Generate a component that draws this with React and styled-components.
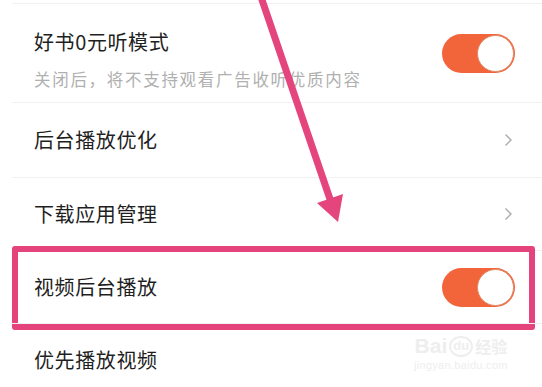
import styled, { createGlobalStyle } from 'styled-components';

const GlobalStyle = createGlobalStyle`
  html, body {
    margin: 0;
    padding: 0;
    background: #fff;
    overflow: hidden;
  }
  body {
    font-family: "Noto Sans CJK SC", "Noto Sans", sans-serif;
  }
`;

const Page = styled.div`
  position: relative;
  width: 542px;
  height: 387px;
  padding-top: 3px;
  box-sizing: border-box;
  overflow: hidden;
  background: #fff;
`;

const List = styled.div`
  display: flex;
  flex-direction: column;
`;

const Row = styled.div`
  position: relative;
  display: flex;
  align-items: center;
  justify-content: space-between;
  height: ${(p) => p.$height}px;
  margin-left: 12px;
  padding: 0 27px 0 22px;
  border-top: 1px solid #f1f1f1;
  box-sizing: border-box;
`;

const Highlight = styled.div`
  position: absolute;
  top: -5px;
  bottom: -7px;
  left: 0;
  right: 7px;
  border: 6px solid #e5437c;
  border-radius: 3px;
  pointer-events: none;
`;

const TextBlock = styled.div`
  display: flex;
  flex-direction: column;
  padding-top: ${(p) => p.$offset || 0}px;
`;

const Title = styled.div`
  font-size: 20px;
  line-height: 26px;
  letter-spacing: 0.6px;
  color: #1f1f1f;
`;

const Subtitle = styled.div`
  margin-top: 13px;
  font-size: 16.5px;
  line-height: 22px;
  letter-spacing: 1.7px;
  color: #b0b0b0;
`;

const Toggle = styled.div`
  display: flex;
  justify-content: flex-end;
  align-items: center;
  width: 73px;
  height: 39px;
  padding: 1px;
  box-sizing: border-box;
  border-radius: 20px;
  background: #f2653b;
`;

const Knob = styled.div`
  width: 37px;
  height: 37px;
  box-sizing: border-box;
  border-radius: 50%;
  background: #fff;
  border: 1.5px solid #dd8c68;
`;

const Chevron = styled.svg`
  width: 9px;
  height: 14px;
  margin-right: 2px;
`;

const Arrow = styled.svg`
  position: absolute;
  left: 0;
  top: 0;
  pointer-events: none;
`;

const Watermark = styled.div`
  position: absolute;
  left: 414px;
  top: 334px;
  display: flex;
  flex-direction: column;
  align-items: center;
  color: #eeeeee;
  pointer-events: none;
`;

const MarkTop = styled.div`
  display: flex;
  align-items: center;
  gap: 2px;
  font-family: "Liberation Sans", sans-serif;
  font-weight: bold;
  font-size: 21px;
  line-height: 24px;
`;

const MarkPaw = styled.span`
  display: inline-flex;
  align-items: center;
  justify-content: center;
  width: 24px;
  height: 21px;
  border-radius: 50%;
  border: 2px solid #eeeeee;
  font-size: 13px;
  box-sizing: border-box;
`;

const MarkCn = styled.span`
  font-family: "Noto Sans CJK SC", sans-serif;
  font-size: 16px;
  font-weight: bold;
`;

const MarkUrl = styled.div`
  font-family: "Liberation Sans", sans-serif;
  font-size: 11px;
  line-height: 14px;
  letter-spacing: 0.3px;
`;

const Switch = () => (
  <Toggle>
    <Knob />
  </Toggle>
);

const Arrowhead = () => (
  <Chevron viewBox="0 0 9 14">
    <path d="M1.5 1.5 L7 7 L1.5 12.5" fill="none" stroke="#ababab" strokeWidth="1.4" />
  </Chevron>
);

const App = () => {
  return (
    <Page>
      <GlobalStyle />
      <List>
        <Row $height={99}>
          <TextBlock $offset={12}>
            <Title>好书0元听模式</Title>
            <Subtitle>关闭后，将不支持观看广告收听优质内容</Subtitle>
          </TextBlock>
          <Switch />
        </Row>
        <Row $height={75}>
          <Title>后台播放优化</Title>
          <Arrowhead />
        </Row>
        <Row $height={73}>
          <Title>下载应用管理</Title>
          <Arrowhead />
        </Row>
        <Row $height={73}>
          <Title>视频后台播放</Title>
          <Switch />
          <Highlight />
        </Row>
        <Row $height={73}>
          <Title>优先播放视频</Title>
        </Row>
      </List>

      <Arrow width="542" height="387" viewBox="0 0 542 387">
        <line x1="260" y1="-6" x2="331" y2="202" stroke="#e5457d" strokeWidth="7" />
        <polygon points="338,222 343,194 317,203" fill="#e5457d" />
      </Arrow>

      <Watermark>
        <MarkTop>
          Bai<MarkPaw>du</MarkPaw>
          <MarkCn>经验</MarkCn>
        </MarkTop>
        <MarkUrl>jingyan.baidu.com</MarkUrl>
      </Watermark>
    </Page>
  );
};

export default App;
